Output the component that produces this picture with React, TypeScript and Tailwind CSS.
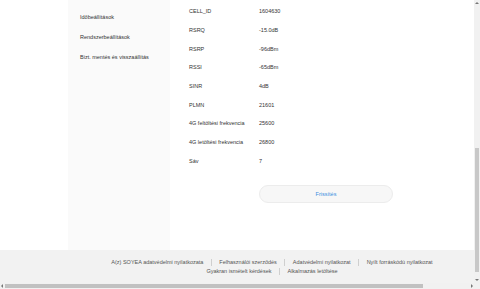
import React from "react";

const rows: [string, string][] = [
  ["CELL_ID", "1604630"],
  ["RSRQ", "-15.0dB"],
  ["RSRP", "-96dBm"],
  ["RSSI", "-65dBm"],
  ["SINR", "4dB"],
  ["PLMN", "21601"],
  ["4G feltöltési frekvencia", "25600"],
  ["4G letöltési frekvencia", "26800"],
  ["Sáv", "7"],
];

function Sep() {
  return <span className="mx-[7.5px] inline-block h-[7px] w-px bg-[#cfcfcf] align-middle" />;
}

export default function App() {
  return (
    <div
      className="flex h-[289px] w-[480px] flex-col overflow-hidden bg-white text-[#333]"
      style={{ fontFamily: '"Liberation Sans", Arial, sans-serif' }}
    >
      <div className="flex h-[283px]">
        <div className="flex flex-1 flex-col">
          <div className="flex h-[250px]">
            <div className="w-[68px]" />
            <div className="flex w-[102px] flex-col gap-[14px] bg-[#fafafa] pl-[12px] pt-[14px] text-[5.5px] leading-[6px]">
              <div>Időbeállítások</div>
              <div>Rendszerbeállítások</div>
              <div>Bizt. mentés és visszaállítás</div>
            </div>
            <div className="flex flex-1 flex-col pl-[19px] pt-[2px]">
              {rows.map(([k, v]) => (
                <div key={k} className="flex h-[18.7px] items-center text-[5.5px]">
                  <div className="w-[70px]">{k}</div>
                  <div>{v}</div>
                </div>
              ))}
              <div className="ml-[70px] mt-[15px] flex h-[18px] w-[134px] items-center justify-center rounded-full border border-[#ececec] bg-[#f7f7f7] text-[5.5px] text-[#3b8ee0]">
                Frissítés
              </div>
            </div>
          </div>
          <div className="flex h-[33px] bg-[#f2f2f2] text-[5.5px] leading-[9px] text-[#555]">
            <div className="w-[70px]" />
            <div className="flex flex-1 flex-col items-center pt-[8px]">
              <div className="flex items-center">
                <span>A(z) SOYEA adatvédelmi nyilatkozata</span>
                <Sep />
                <span>Felhasználói szerződés</span>
                <Sep />
                <span>Adatvédelmi nyilatkozat</span>
                <Sep />
                <span>Nyílt forráskódú nyilatkozat</span>
              </div>
              <div className="flex items-center">
                <span>Gyakran ismételt kérdések</span>
                <Sep />
                <span>Alkalmazás letöltése</span>
              </div>
            </div>
          </div>
        </div>
        <div className="flex w-[6px] flex-col items-center bg-[#f1f1f1]">
          <div className="mt-[2px] h-0 w-0 border-x-[2px] border-b-[2px] border-x-transparent border-b-[#777]" />
          <div className="mt-[144px] h-[124px] w-[4px] bg-[#c8c8c8]" />
          <div className="mb-[2px] mt-auto h-0 w-0 border-x-[2px] border-t-[2px] border-x-transparent border-t-[#777]" />
        </div>
      </div>
      <div className="flex h-[6px]">
        <div className="flex flex-1 items-center bg-[#f1f1f1]">
          <div className="ml-[1px] h-0 w-0 border-y-[2px] border-r-[2px] border-y-transparent border-r-[#777]" />
          <div className="ml-[2px] h-[4px] w-[418px] bg-[#c1c1c1]" />
          <div className="ml-auto mr-[1px] h-0 w-0 border-y-[2px] border-l-[2px] border-y-transparent border-l-[#777]" />
        </div>
        <div className="w-[6px] bg-[#f1f1f1]" />
      </div>
    </div>
  );
}
